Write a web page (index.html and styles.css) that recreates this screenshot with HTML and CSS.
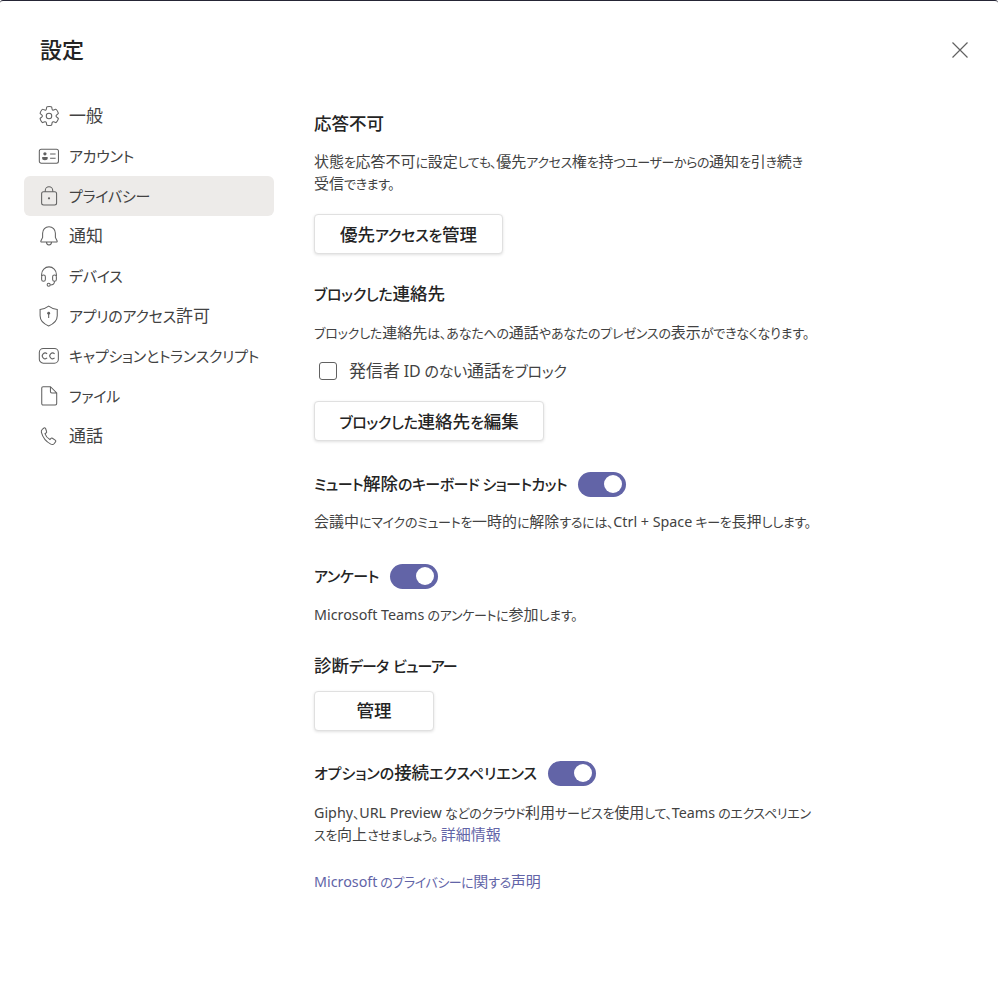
FILE: index.html
```html
<!DOCTYPE html>
<html lang="ja">
<head>
<meta charset="utf-8">
<title>設定</title>
<link rel="stylesheet" href="styles.css">
</head>
<body>
<div class="dialog">
  <header class="head">
    <h1 class="title">設定</h1>
    <svg class="close" viewBox="0 0 16 16" width="16" height="16"><path d="M.5.5l15 15M15.500.5l-15 15" fill="none" stroke="#616161" stroke-width="1.200"/></svg>
  </header>
  <div class="main">
    <nav class="nav">
      <a class="item"><svg class="ico" viewBox="0 0 20 20"><path d="M1.910 7.380A8.500 8.500 0 0 1 3.780 4.100a.5.5 0 0 1 .54-.13l1.920.68a1 1 0 0 0 1.320-.76l.36-2a.5.5 0 0 1 .4-.4 8.530 8.530 0 0 1 3.760 0c.2.04.35.2.38.4l.37 2a1 1 0 0 0 1.320.76l1.920-.68a.5.5 0 0 1 .54.13 8.500 8.500 0 0 1 1.870 3.280.5.5 0 0 1-.15.52l-1.550 1.320a1 1 0 0 0 0 1.520l1.550 1.320a.5.5 0 0 1 .15.52 8.500 8.500 0 0 1-1.870 3.280.5.5 0 0 1-.54.13l-1.920-.68a1 1 0 0 0-1.320.76l-.37 2a.5.5 0 0 1-.38.4 8.530 8.530 0 0 1-3.760 0 .5.5 0 0 1-.4-.4l-.36-2a1 1 0 0 0-1.320-.76l-1.920.68a.5.5 0 0 1-.54-.13 8.500 8.500 0 0 1-1.870-3.280.5.5 0 0 1 .15-.52l1.550-1.320a1 1 0 0 0 0-1.520L2.060 7.900a.5.5 0 0 1-.15-.52Z"/><circle cx="10" cy="10" r="2.500"/></svg><span class="t"><i>一般</i></span></a>
      <a class="item"><svg class="ico" viewBox="0 0 20 20"><rect x="1.200" y="3.900" width="17.400" height="12.700" rx="1.800"/><circle cx="6.300" cy="8" r="1.500" class="solid"/><path class="solid" d="M3.800 11h5v1.300c0 .9-1 1.500-2.500 1.500s-2.500-.6-2.500-1.500z"/><path d="M11 8.200h5M11 12h5"/></svg><span class="t">アカウント</span></a>
      <a class="item active"><svg class="ico" viewBox="0 0 20 20"><rect x="3.300" y="6.100" width="13.600" height="12.100" rx="1.800"/><path d="M6.600 6.100V5a3.400 3.400 0 0 1 6.800 0v1.100"/><circle cx="10" cy="12.100" r="1" class="solid"/></svg><span class="t">プライバシー</span></a>
      <a class="item"><svg class="ico" viewBox="0 0 20 20"><path d="M10 1.600c-3.400 0-5.800 2.600-5.800 5.800v3.900L2.600 14.600c-.2.500.1.900.6.900h13.600c.5 0 .8-.4.6-.9l-1.600-3.300V7.400c0-3.200-2.400-5.800-5.800-5.800zM7.700 15.500c0 1.600 1 2.700 2.300 2.700s2.300-1.100 2.300-2.700"/></svg><span class="t"><i>通知</i></span></a>
      <a class="item"><svg class="ico" viewBox="0 0 20 20"><path d="M3.300 10V8.400a6.700 6.700 0 0 1 13.400 0V10"/><rect x="3.300" y="9" width="3.400" height="5.800" rx="1.700"/><rect x="13.300" y="9" width="3.400" height="5.800" rx="1.700"/><path d="M15 14.800c0 2-1.500 3.400-3.800 3.400"/><circle cx="9.700" cy="18" r="1.400"/></svg><span class="t">デバイス</span></a>
      <a class="item"><svg class="ico" viewBox="0 0 20 20"><path d="M9.700 1c2.300 1.800 4.700 2.700 7.800 3v5.800c0 4-2.800 7.200-7.800 9.200-5-2-7.800-5.200-7.800-9.200V4c3.100-.3 5.500-1.200 7.800-3z"/><circle cx="9.700" cy="7.500" r="1.300" class="solid"/><path d="M9.700 7.500v4.300"/></svg><span class="t">アプリのアクセス<i>許可</i></span></a>
      <a class="item"><svg class="ico" viewBox="0 0 20 20"><rect x="1.200" y="3.200" width="17.300" height="13.300" rx="3.600"/><path d="M8.300 8a2.600 2.600 0 1 0 0 3.800M15.100 8a2.600 2.600 0 1 0 0 3.800"/></svg><span class="t">キャプションとトランスクリプト</span></a>
      <a class="item"><svg class="ico" viewBox="0 0 20 20"><path d="M3.400 2.700c0-.7.500-1.200 1.200-1.200h6.700l5.700 5.700v9.700c0 .7-.5 1.200-1.200 1.200H4.600c-.7 0-1.200-.5-1.200-1.200zM11.300 1.500v4.500c0 .7.500 1.200 1.200 1.200h4.500"/></svg><span class="t">ファイル</span></a>
      <a class="item"><svg class="ico" viewBox="0 0 20 20"><path d="M5.500 2.700 4.100 3.700c-1 .7-1.300 1.900-1 3.100 1.200 4.500 4.500 8.600 8.500 10.600 1.200.6 2.500.3 3.200-.6l1.100-1.400c.5-.6.300-1.300-.3-1.700l-2.500-1.600c-.5-.3-1.100-.2-1.500.2l-.8.900c-2.100-1-3.700-3-4.500-5.300l1-.6c.5-.3.700-.9.500-1.400L6.900 3.200c-.3-.6-.9-.8-1.400-.5z"/></svg><span class="t"><i>通話</i></span></a>
    </nav>
    <main class="content">
      <section class="sec sec-dnd">
        <h2 class="h"><i>応答不可</i></h2>
        <p class="p p-dnd"><i>状態</i>を<i>応答不可</i>に<i>設定</i>しても、<i>優先</i>アクセス<i>権</i>を<i>持</i>つユーザーからの<i>通知</i>を<i>引</i>き<i>続</i>き<br><i>受信</i>できます。</p>
        <button class="btn btn-priority"><i>優先</i>アクセスを<i>管理</i></button>
      </section>
      <section class="sec sec-block">
        <h2 class="h">ブロックした<i>連絡先</i></h2>
        <p class="p p-block">ブロックした<i>連絡先</i>は、あなたへの<i>通話</i>やあなたのプレゼンスの<i>表示</i>ができなくなります。</p>
        <label class="check"><span class="box"></span><span class="t"><i>発信者</i> <b class="l">ID</b> のない<i>通話</i>をブロック</span></label>
        <button class="btn btn-edit">ブロックした<i>連絡先</i>を<i>編集</i></button>
      </section>
      <section class="sec sec-mute">
        <div class="row"><h2 class="h h-mute">ミュート<i>解除</i>のキーボード ショートカット</h2><span class="toggle"></span></div>
        <p class="p p-row"><i>会議中</i>にマイクのミュートを<i>一時的</i>に<i>解除</i>するには、<b class="l">Ctrl + Space</b> キーを<i>長押</i>しします。</p>
      </section>
      <section class="sec sec-poll">
        <div class="row"><h2 class="h h-poll">アンケート</h2><span class="toggle"></span></div>
        <p class="p p-poll"><b class="l">Microsoft Teams</b> のアンケートに<i>参加</i>します。</p>
      </section>
      <section class="sec sec-diag">
        <h2 class="h h-diag"><i>診断</i>データ ビューアー</h2>
        <button class="btn btn-manage"><i>管理</i></button>
      </section>
      <section class="sec sec-opt">
        <div class="row"><h2 class="h h-opt">オプションの<i>接続</i>エクスペリエンス</h2><span class="toggle"></span></div>
        <p class="p p-opt"><b class="l">Giphy</b>、<b class="l">URL Preview</b> などのクラウド<i>利用</i>サービスを<i>使用</i>して、<b class="l">Teams</b> のエクスペリエン<br>スを<i>向上</i>させましょう。<a class="link more"><i>詳細情報</i></a></p>
      </section>
      <a class="link statement"><b class="l">Microsoft</b> のプライバシーに<i>関</i>する<i>声明</i></a>
    </main>
  </div>
</div>
</body>
</html>
```
FILE: styles.css
```css
* { box-sizing: border-box; }
html, body { margin: 0; height: 1000px; background: #fff; overflow: hidden; }
body {
  font-family: "Noto Sans", "Noto Sans CJK JP", sans-serif;
  font-feature-settings: "palt";
  color: #242424;
}
i { font-style: normal; letter-spacing: 0; line-height: 0; }
.l { font-weight: 400; font-size: 14.300px; letter-spacing: 0; line-height: 0; }
.dialog { height: 1000px; border-top: 1px solid #252535; border-radius: 3px 3px 0 0; }
.head { display: flex; justify-content: space-between; align-items: center; padding: 32px 30px 0 40px; height: 64px; }
.title { margin: 0; font-size: 22px; line-height: 30px; font-weight: 500; }
.close { display: block; margin-top: 2px; }
.main { display: flex; padding-top: 31px; }
.nav { width: 250px; margin-left: 24px; display: flex; flex-direction: column; }
.item { height: 40px; display: flex; align-items: center; padding-left: 14px; border-radius: 6px; color: #424242; gap: 9px; white-space: nowrap; }
.item.active { background: #edebe9; }
.t { font-size: 15px; letter-spacing: -.25px; line-height: 24px; }
.t i { font-size: 17px; }
.t .l { font-size: 16px; }
.ico { width: 22px; height: 22px; flex: none; fill: none; stroke: #616161; stroke-width: .95; }
.ico .solid { fill: #616161; stroke: none; }
.content { margin-left: 40px; width: 520px; padding-top: 16px; }
.h { margin: 0; font-size: 15px; letter-spacing: -.25px; line-height: 24px; font-weight: 500; color: #242424; white-space: nowrap; }
.h i { font-size: 17.500px; }
.h-mute { letter-spacing: -.58px; }
.h-poll { letter-spacing: -.45px; }
.h-diag { letter-spacing: -.95px; word-spacing: 2px; }
.h-opt { letter-spacing: -.05px; }
.p { margin: 0; font-size: 13px; letter-spacing: -.2px; line-height: 22px; color: #424242; white-space: nowrap; }
.p i { font-size: 15px; }
.p-dnd { margin-top: 15px; letter-spacing: -.43px; }
.btn { display: block; height: 40px; padding: 0; background: #fff; border: 1px solid #e0e0e0; border-radius: 4px; font: inherit; font-size: 15px; letter-spacing: -.3px; font-weight: 500; color: #242424; box-shadow: 0 1px 3px rgba(0,0,0,.12); }
.btn i { font-size: 17.500px; }
.btn-priority { width: 189px; margin-top: 19px; }
.btn-edit { width: 230px; margin-top: 17px; }
.btn-manage { width: 120px; margin-top: 13px; }
.sec-block { margin-top: 28px; }
.p-block { margin-top: 16px; }
.check { display: flex; align-items: center; gap: 12px; margin-top: 14px; height: 26px; padding-left: 5px; color: #424242; }
.box { width: 18px; height: 18px; border: 1px solid #616161; border-radius: 3px; }
.row { display: flex; align-items: center; gap: 11px; height: 24px; }
.toggle { position: relative; width: 48px; height: 25px; border-radius: 13px; background: #6264a7; flex: none; }
.toggle::after { content: ""; position: absolute; right: 4px; top: 3.500px; width: 18px; height: 18px; border-radius: 50%; background: #fff; }
.sec-mute { margin-top: 31px; }
.sec-poll { margin-top: 31px; }
.sec-diag { margin-top: 28px; }
.sec-opt { margin-top: 30px; }
.p-row { margin-top: 15px; letter-spacing: -.3px; }
.p-poll { margin-top: 16px; letter-spacing: -.3px; }
.p-opt { margin-top: 17px; letter-spacing: -.3px; }
.link { color: #6264a7; }
.more { margin-left: 3px; }
.statement { display: block; margin-top: 25px; font-size: 13px; letter-spacing: -.45px; line-height: 22px; }
.statement i { font-size: 15px; }
```
